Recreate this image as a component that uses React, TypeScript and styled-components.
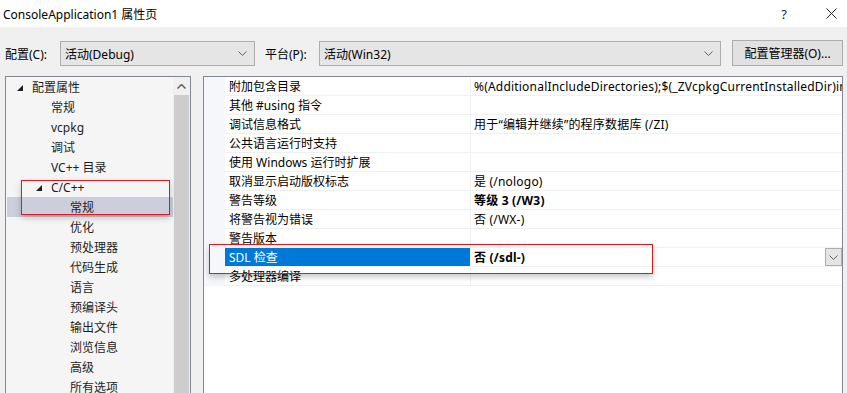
import React from "react"
import styled, { createGlobalStyle } from "styled-components"

const GlobalStyle = createGlobalStyle`
	body {
		margin: 0;
		background: #f0f0f0;
		font-family: "Noto Sans", "Noto Sans CJK SC", sans-serif;
		font-size: 12px;
		color: #000;
	}
`

type TreeItem = { label: string; level: number; expanded?: boolean; selected?: boolean }

const treeItems: TreeItem[] = [
	{ label: "配置属性", level: 0, expanded: true },
	{ label: "常规", level: 1 },
	{ label: "vcpkg", level: 1 },
	{ label: "调试", level: 1 },
	{ label: "VC++ 目录", level: 1 },
	{ label: "C/C++", level: 1, expanded: true },
	{ label: "常规", level: 2, selected: true },
	{ label: "优化", level: 2 },
	{ label: "预处理器", level: 2 },
	{ label: "代码生成", level: 2 },
	{ label: "语言", level: 2 },
	{ label: "预编译头", level: 2 },
	{ label: "输出文件", level: 2 },
	{ label: "浏览信息", level: 2 },
	{ label: "高级", level: 2 },
	{ label: "所有选项", level: 2 },
]

type Prop = { name: string; value?: string; bold?: boolean; selected?: boolean }

const props: Prop[] = [
	{ name: "附加包含目录", value: "%(AdditionalIncludeDirectories);$(_ZVcpkgCurrentInstalledDir)include" },
	{ name: "其他 #using 指令" },
	{ name: "调试信息格式", value: "用于“编辑并继续”的程序数据库 (/ZI)" },
	{ name: "公共语言运行时支持" },
	{ name: "使用 Windows 运行时扩展" },
	{ name: "取消显示启动版权标志", value: "是 (/nologo)" },
	{ name: "警告等级", value: "等级 3 (/W3)", bold: true },
	{ name: "将警告视为错误", value: "否 (/WX-)" },
	{ name: "警告版本" },
	{ name: "SDL 检查", value: "否 (/sdl-)", bold: true, selected: true },
	{ name: "多处理器编译" },
]

const Chevron: React.FC = () => (
	<svg width="9" height="5" viewBox="0 0 9 5">
		<polyline points="0.5,0.5 4.5,4.5 8.5,0.5" fill="none" stroke="#606060" strokeWidth="1" />
	</svg>
)

const App: React.FC = () => {
	return (
		<Window>
			<GlobalStyle />
			<TitleBar>
				<Title>ConsoleApplication1 属性页</Title>
				<TitleButton>?</TitleButton>
				<TitleButton $last>
					<svg width="11" height="11" viewBox="0 0 11 11">
						<path d="M0.5 0.5 L10.5 10.5 M10.5 0.5 L0.5 10.5" stroke="#222" strokeWidth="1" />
					</svg>
				</TitleButton>
			</TitleBar>

			<Toolbar>
				<Label $w={55}>配置(C):</Label>
				<Combo $w={195}>
					<span>活动(Debug)</span>
					<Chevron />
				</Combo>
				<Label $w={54} $ml={10}>平台(P):</Label>
				<Combo $w={402}>
					<span>活动(Win32)</span>
					<Chevron />
				</Combo>
				<Button>配置管理器(O)...</Button>
			</Toolbar>

			<Main>
				<TreePanel>
					<TreeList>
						{treeItems.map((item, i) => (
							<TreeRow key={i} $level={item.level} $selected={item.selected}>
								<Expander>
									{item.expanded && (
										<svg width="6" height="6" viewBox="0 0 6 6">
											<polygon points="6,0 6,6 0,6" fill="#1e1e1e" />
										</svg>
									)}
								</Expander>
								{item.label}
							</TreeRow>
						))}
					</TreeList>
					<ScrollBar>
						<ScrollArrow>
							<svg width="9" height="5" viewBox="0 0 9 5">
								<polyline points="0.5,4.5 4.5,0.5 8.5,4.5" fill="none" stroke="#606060" strokeWidth="1.5" />
							</svg>
						</ScrollArrow>
						<ScrollThumb />
					</ScrollBar>
				</TreePanel>

				<GridPanel>
					{props.map((p, i) => (
						<GridRow key={i}>
							<Gutter />
							<NameCell $selected={p.selected}>{p.name}</NameCell>
							<ValueCell $bold={p.bold}>
								<ValueText>{p.value}</ValueText>
								{p.selected && (
									<DropButton>
										<Chevron />
									</DropButton>
								)}
							</ValueCell>
						</GridRow>
					))}
				</GridPanel>
			</Main>

			<Highlight $x={21} $y={180} $w={149} $h={35} />
			<Highlight $x={209} $y={244} $w={444} $h={30} />
		</Window>
	)
}

export default App

const Window = styled.div`
	position: relative;
	width: 847px;
	height: 393px;
	overflow: hidden;
	display: flex;
	flex-direction: column;
	background: #f0f0f0;
`

const TitleBar = styled.div`
	height: 27px;
	flex-shrink: 0;
	background: #fff;
	display: flex;
	align-items: center;
	padding-left: 3px;
`

const Title = styled.div`
	flex: 1;
	color: #000;
	font-size: 12px;
`

const TitleButton = styled.div<{ $last?: boolean }>`
	width: 20px;
	height: 20px;
	display: flex;
	align-items: center;
	justify-content: center;
	font-size: 13px;
	color: #222;
	margin-left: ${(p) => (p.$last ? "27px" : "0")};
	margin-right: ${(p) => (p.$last ? "6px" : "0")};
`

const Toolbar = styled.div`
	display: flex;
	align-items: center;
	height: 25px;
	padding: 14px 5px 0 5px;
	flex-shrink: 0;
`

const Label = styled.div<{ $w: number; $ml?: number }>`
	width: ${(p) => p.$w}px;
	margin-left: ${(p) => p.$ml ?? 0}px;
	flex-shrink: 0;
`

const Combo = styled.div<{ $w: number }>`
	width: ${(p) => p.$w}px;
	height: 25px;
	box-sizing: border-box;
	border: 1px solid #adadad;
	background: #e5e5e5;
	display: flex;
	align-items: center;
	justify-content: space-between;
	padding: 0 7px 0 4px;
	flex-shrink: 0;
`

const Button = styled.div`
	width: 111px;
	height: 26px;
	margin-left: 11px;
	margin-top: -1px;
	box-sizing: border-box;
	border: 1px solid #adadad;
	background: #e1e1e1;
	display: flex;
	align-items: center;
	justify-content: center;
	flex-shrink: 0;
`

const Main = styled.div`
	display: flex;
	gap: 12px;
	padding: 10px 0 0 5px;
	flex: 1;
	min-height: 0;
`

const TreePanel = styled.div`
	width: 186px;
	height: 340px;
	box-sizing: border-box;
	border: 1px solid #828790;
	background: #f5f5f5;
	display: flex;
	flex-shrink: 0;
`

const TreeList = styled.div`
	flex: 1;
	display: flex;
	flex-direction: column;
`

const TreeRow = styled.div<{ $level: number; $selected?: boolean }>`
	height: 20px;
	display: flex;
	align-items: center;
	padding-left: ${(p) => 10 + p.$level * 19}px;
	margin-left: 1px;
	background: ${(p) => (p.$selected ? "#cccedb" : "transparent")};
	color: #1e1e1e;
	white-space: nowrap;
`

const Expander = styled.div`
	width: 15px;
	height: 20px;
	display: flex;
	align-items: center;
	padding-top: 1px;
	box-sizing: border-box;
	flex-shrink: 0;
`

const ScrollBar = styled.div`
	width: 17px;
	display: flex;
	flex-direction: column;
	background: #f0f0f0;
	flex-shrink: 0;
`

const ScrollArrow = styled.div`
	height: 18px;
	display: flex;
	align-items: center;
	justify-content: center;
`

const ScrollThumb = styled.div`
	flex: 1;
	margin: 0 1px;
	background: #cdcdcd;
`

const GridPanel = styled.div`
	width: 640px;
	height: 340px;
	box-sizing: border-box;
	border: 1px solid #828790;
	background: #fff;
	flex-shrink: 0;
	display: flex;
	flex-direction: column;
`

const GridRow = styled.div`
	display: grid;
	grid-template-columns: 21px 246px 1fr;
	height: 19px;
	box-sizing: border-box;
	border-bottom: 1px solid #f0f0f0;
`

const Gutter = styled.div`
	background: #f5f7fb;
	margin-bottom: -1px;
`

const NameCell = styled.div<{ $selected?: boolean }>`
	display: flex;
	align-items: center;
	padding-left: 4px;
	border-right: 1px solid #f0f0f0;
	background: ${(p) => (p.$selected ? "#0078d7" : "transparent")};
	color: ${(p) => (p.$selected ? "#fff" : "#000")};
	white-space: nowrap;
	overflow: hidden;
`

const ValueCell = styled.div<{ $bold?: boolean }>`
	display: flex;
	align-items: center;
	padding-left: 3px;
	font-weight: ${(p) => (p.$bold ? 700 : 400)};
	overflow: hidden;
	min-width: 0;
`

const ValueText = styled.span`
	flex: 1;
	white-space: nowrap;
	overflow: hidden;
	letter-spacing: 0.2px;
`

const DropButton = styled.div`
	width: 17px;
	height: 18px;
	box-sizing: border-box;
	border: 1px solid #adadad;
	background: #e5e5e5;
	display: flex;
	align-items: center;
	justify-content: center;
	flex-shrink: 0;
`

const Highlight = styled.div<{ $x: number; $y: number; $w: number; $h: number }>`
	position: absolute;
	left: ${(p) => p.$x}px;
	top: ${(p) => p.$y}px;
	width: ${(p) => p.$w}px;
	height: ${(p) => p.$h}px;
	box-sizing: border-box;
	border: 1px solid #e8161b;
	box-shadow: 0 3px 6px rgba(0, 0, 0, 0.22);
	pointer-events: none;
`
